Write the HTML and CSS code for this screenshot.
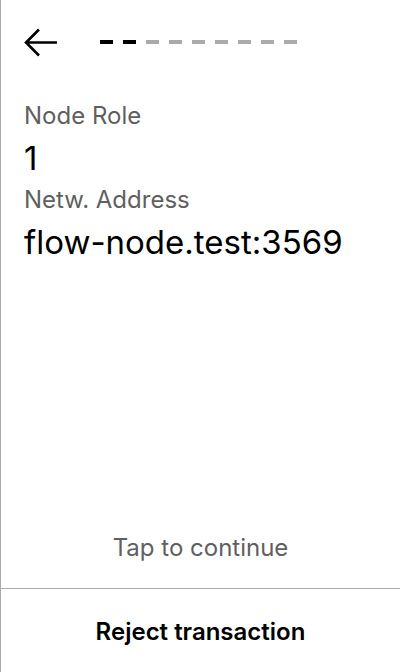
FILE: index.html
```html
<!DOCTYPE html>
<html>
<head>
<meta charset="utf-8">
<link rel="stylesheet" href="styles.css">
</head>
<body>
<div class="screen">
  <div class="header">
    <div class="back">
      <svg width="34" height="30" viewBox="0 0 34 30">
        <path d="M33 14.5H2M15 1.5L2 14.5L15 27.5" fill="none" stroke="#000" stroke-width="2.6" stroke-linecap="butt" stroke-linejoin="miter"/>
      </svg>
    </div>
    <div class="progress">
      <span class="dash on"></span><span class="dash on"></span><span class="dash"></span><span class="dash"></span><span class="dash"></span><span class="dash"></span><span class="dash"></span><span class="dash"></span><span class="dash"></span>
    </div>
  </div>
  <div class="content">
    <div class="label">Node Role</div>
    <div class="value">1</div>
    <div class="label">Netw. Address</div>
    <div class="value">flow-node.test:3569</div>
  </div>
  <div class="tap">Tap to continue</div>
  <div class="reject">Reject transaction</div>
</div>
</body>
</html>
```

FILE: styles.css
```css
html, body {
  margin: 0;
  padding: 0;
  background: #fff;
}
.screen {
  width: 400px;
  height: 672px;
  box-sizing: border-box;
  border-left: 1px solid #aaa;
  display: flex;
  flex-direction: column;
  font-family: Inter, "Noto Sans", sans-serif;
  color: #000;
}
.header {
  display: flex;
  align-items: center;
  height: 28px;
  padding: 29px 0 0 23px;
}
.back {
  width: 34px;
  height: 30px;
}
.back svg {
  display: block;
}
.progress {
  display: flex;
  gap: 10px;
  margin-left: 42px;
  margin-top: -2px;
}
.dash {
  width: 13px;
  height: 4px;
  background: #aaa;
}
.dash.on {
  background: #000;
}
.content {
  padding: 0 0 0 23px;
  margin-top: 38px;
  flex: 1;
}
.label {
  font-size: 24px;
  line-height: 42px;
  color: #5f5f5f;
}
.value {
  font-size: 33px;
  line-height: 42px;
}
.tap {
  text-align: center;
  font-size: 24px;
  color: #5f5f5f;
  line-height: 36px;
  padding-bottom: 22px;
  border-bottom: 1px solid #aaa;
}
.reject {
  height: 83px;
  box-sizing: border-box;
  padding-top: 2px;
  display: flex;
  align-items: center;
  justify-content: center;
  font-size: 24px;
  font-weight: 600;
}
```
